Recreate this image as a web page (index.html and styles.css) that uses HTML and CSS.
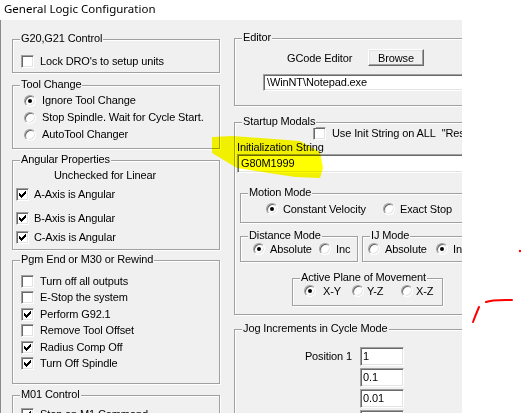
FILE: index.html
```html
<!DOCTYPE html>
<html>
<head>
<meta charset="utf-8">
<link rel="stylesheet" href="styles.css">
</head>
<body>
<svg class="defs" width="0" height="0" aria-hidden="true">
  <symbol id="chk" viewBox="0 0 7 7">
    <rect x="6" y="0" width="1" height="1"/>
    <rect x="5" y="1" width="2" height="1"/>
    <rect x="0" y="2" width="1" height="1"/><rect x="4" y="2" width="3" height="1"/>
    <rect x="0" y="3" width="2" height="1"/><rect x="3" y="3" width="3" height="1"/>
    <rect x="0" y="4" width="5" height="1"/>
    <rect x="1" y="5" width="3" height="1"/>
    <rect x="2" y="6" width="1" height="1"/>
  </symbol>
</svg>
<div class="screen">
  <div class="titlebar">General Logic Configuration</div>
  <div class="dialog">
    <div class="col-left">
      <div class="group g-units">
        <span class="legend">G20,G21 Control</span>
        <div class="opt"><span class="cb"></span><span>Lock DRO's to setup units</span></div>
      </div>
      <div class="group g-tool">
        <span class="legend">Tool Change</span>
        <div class="ropt-l"><span class="rb on"></span><span>Ignore Tool Change</span></div>
        <div class="ropt-l"><span class="rb"></span><span>Stop Spindle. Wait for Cycle Start.</span></div>
        <div class="ropt-l"><span class="rb"></span><span>AutoTool Changer</span></div>
      </div>
      <div class="group g-ang">
        <span class="legend">Angular Properties</span>
        <div class="note">Unchecked for Linear</div>
        <div class="opt a1"><span class="cb"><svg class="chk"><use href="#chk"/></svg></span><span>A-Axis is Angular</span></div>
        <div class="opt a2"><span class="cb"><svg class="chk"><use href="#chk"/></svg></span><span>B-Axis is Angular</span></div>
        <div class="opt a3"><span class="cb"><svg class="chk"><use href="#chk"/></svg></span><span>C-Axis is Angular</span></div>
      </div>
      <div class="group g-pgm">
        <span class="legend">Pgm End or M30 or Rewind</span>
        <div class="opt"><span class="cb"></span><span>Turn off all outputs</span></div>
        <div class="opt"><span class="cb"></span><span>E-Stop the system</span></div>
        <div class="opt"><span class="cb"><svg class="chk"><use href="#chk"/></svg></span><span>Perform G92.1</span></div>
        <div class="opt"><span class="cb"></span><span>Remove Tool Offset</span></div>
        <div class="opt"><span class="cb"><svg class="chk"><use href="#chk"/></svg></span><span>Radius Comp Off</span></div>
        <div class="opt"><span class="cb"><svg class="chk"><use href="#chk"/></svg></span><span>Turn Off Spindle</span></div>
      </div>
      <div class="group g-m01">
        <span class="legend">M01 Control</span>
        <div class="opt"><span class="cb"><svg class="chk"><use href="#chk"/></svg></span><span>Stop on M1 Command</span></div>
      </div>
    </div>

    <div class="col-right">
      <div class="group g-editor">
        <span class="legend">Editor</span>
        <div class="ed-row"><span class="ed-label">GCode Editor</span><span class="btn">Browse</span></div>
        <div class="field ed-field">\WinNT\Notepad.exe</div>
      </div>
      <div class="group g-startup">
        <span class="legend">Startup Modals</span>
        <div class="opt init-opt"><span class="cb"></span><span>Use Init String on ALL&nbsp; "Resets"</span></div>
        <div class="init-label">Initialization String</div>
        <div class="field init-field">G80M1999</div>
        <div class="group g-motion">
          <span class="legend">Motion Mode</span>
          <div class="rrow">
            <div class="ropt w117"><span class="rb on"></span><span>Constant Velocity</span></div>
            <div class="ropt"><span class="rb"></span><span>Exact Stop</span></div>
          </div>
        </div>
        <div class="pair">
          <div class="group g-dist">
            <span class="legend">Distance Mode</span>
            <div class="rrow">
              <div class="ropt w66"><span class="rb on"></span><span>Absolute</span></div>
              <div class="ropt"><span class="rb"></span><span>Inc</span></div>
            </div>
          </div>
          <div class="group g-ij">
            <span class="legend">IJ Mode</span>
            <div class="rrow">
              <div class="ropt w68"><span class="rb"></span><span>Absolute</span></div>
              <div class="ropt"><span class="rb on"></span><span>Inc</span></div>
            </div>
          </div>
        </div>
        <div class="group g-plane">
          <span class="legend">Active Plane of Movement</span>
          <div class="rrow tight">
            <div class="ropt w48"><span class="rb on"></span><span class="xy">X-Y</span></div>
            <div class="ropt w49"><span class="rb"></span><span>Y-Z</span></div>
            <div class="ropt"><span class="rb"></span><span>X-Z</span></div>
          </div>
        </div>
      </div>
      <div class="group g-jog">
        <span class="legend">Jog Increments in Cycle Mode</span>
        <div class="jog-row"><span class="jog-label">Position 1</span><span class="field jog-field">1</span></div>
        <div class="jog-row"><span class="jog-label"></span><span class="field jog-field">0.1</span></div>
        <div class="jog-row"><span class="jog-label"></span><span class="field jog-field">0.01</span></div>
        <div class="jog-row"><span class="jog-label"></span><span class="field jog-field">0.001</span></div>
      </div>
    </div>
  </div>

  <svg class="marks" width="521" height="413" viewBox="0 0 521 413">
    <polygon class="hl" points="212,137 232,136 300,141 320,152 323,168 320,178 295,177 237,168 212,153"/>
    <circle cx="520" cy="251" r="1.2" fill="#f00"/>
    <path d="M473 322 Q476 314 479 307" stroke="#f00" stroke-width="2" fill="none" stroke-linecap="round"/>
    <path d="M486 302 Q492 299.5 512 300" stroke="#f00" stroke-width="2" fill="none" stroke-linecap="round"/>
  </svg>
</div>
</body>
</html>
```

FILE: styles.css
```css
* { box-sizing: border-box; }

body {
  margin: 0;
  background: #fff;
  font-family: "Liberation Sans", Arial, sans-serif;
  font-size: 11px;
  letter-spacing: -0.12px;
  color: #000;
}

.defs { position: absolute; }

.screen {
  position: relative;
  width: 521px;
  height: 413px;
  overflow: hidden;
  background: #fff;
}

.titlebar {
  height: 20px;
  padding-left: 4px;
  font-family: "Noto Sans", "Open Sans", sans-serif;
  font-size: 11.5px;
  letter-spacing: 0;
  line-height: 18px;
  color: #000;
  background: #fff;
}

.dialog {
  display: flex;
  width: 462px;
  height: 393px;
  background: #f0f0f0;
  border-left: 1px solid #8c8c8c;
  padding-left: 11px;
  overflow: hidden;
}

.col-left {
  width: 208px;
  flex: none;
  padding-top: 19px;
  display: flex;
  flex-direction: column;
}

.col-right {
  width: 280px;
  flex: none;
  margin-left: 14px;
  padding-top: 18px;
  display: flex;
  flex-direction: column;
}

/* group box */
.group {
  position: relative;
  flex: none;
  border: 1px solid #a0a0a0;
  box-shadow: inset 1px 1px 0 #fff, 1px 1px 0 #fff;
}

.legend {
  position: absolute;
  top: -8px;
  left: 7px;
  padding: 0 1px;
  line-height: 13px;
  background: #f0f0f0;
  white-space: nowrap;
}

/* checkbox */
.opt {
  display: flex;
  align-items: center;
  gap: 6px;
  height: 13px;
  line-height: 13px;
  white-space: nowrap;
}

.cb {
  width: 13px;
  height: 13px;
  flex: none;
  background: #fff;
  border: 1px solid;
  border-color: #a0a0a0 #fff #fff #a0a0a0;
  box-shadow: inset 1px 1px 0 #696969, inset -1px -1px 0 #e3e3e3;
  display: flex;
  align-items: center;
  justify-content: center;
}

.chk {
  width: 7px;
  height: 7px;
  fill: #000;
  shape-rendering: crispEdges;
}

/* radio */
.rb {
  width: 12px;
  height: 12px;
  flex: none;
  border-radius: 50%;
  background: #fff;
  border: 1px solid;
  border-color: #a0a0a0 #fff #fff #a0a0a0;
  box-shadow: inset 1px 1px 0 #696969, inset -1px -1px 0 #e3e3e3;
  display: flex;
  align-items: center;
  justify-content: center;
}

.rb.on::after {
  content: "";
  width: 4px;
  height: 4px;
  border-radius: 50%;
  background: #000;
}

.ropt-l {
  display: flex;
  align-items: center;
  gap: 6px;
  height: 17px;
  line-height: 13px;
  white-space: nowrap;
}

.rrow {
  display: flex;
  align-items: center;
  height: 12px;
}

.ropt {
  display: flex;
  align-items: center;
  gap: 5px;
  flex: none;
  line-height: 13px;
  white-space: nowrap;
}

.rrow.tight .ropt { gap: 3px; }
.xy { padding-left: 4px; }

.w117 { width: 117px; }
.w66 { width: 66px; }
.w68 { width: 68px; }
.w48 { width: 48px; }
.w49 { width: 49px; }

/* sunken field */
.field {
  display: block;
  background: #fff;
  border: 1px solid;
  border-color: #a0a0a0 #fff #fff #a0a0a0;
  box-shadow: inset 1px 1px 0 #696969, inset -1px -1px 0 #e3e3e3;
  padding-left: 3px;
  white-space: nowrap;
  overflow: hidden;
}

/* raised button */
.btn {
  width: 56px;
  height: 17px;
  flex: none;
  display: flex;
  align-items: center;
  justify-content: center;
  background: #f0f0f0;
  border: 1px solid;
  border-color: #fff #696969 #696969 #fff;
  box-shadow: inset -1px -1px 0 #a0a0a0, inset 1px 1px 0 #e3e3e3;
}

/* left column groups */
.g-units {
  height: 34px;
  padding: 15px 0 0 8px;
}

.g-tool {
  margin-top: 12px;
  height: 64px;
  padding: 6px 0 0 11px;
}

.g-ang {
  margin-top: 11px;
  height: 90px;
  padding: 8px 0 0 3px;
}

.g-ang .opt { gap: 5px; }
.note { height: 13px; line-height: 13px; padding-left: 38px; }
.a1 { margin-top: 6px; }
.a2 { margin-top: 11px; }
.a3 { margin-top: 6px; }

.g-pgm {
  margin-top: 10px;
  height: 124px;
  padding: 14px 0 0 8px;
  display: flex;
  flex-direction: column;
  gap: 3.4px;
}

.g-m01 {
  margin-top: 11px;
  height: 60px;
  padding: 12px 0 0 8px;
}

/* right column groups */
.g-editor {
  height: 68px;
  padding-top: 10px;
}

.ed-row {
  display: flex;
  align-items: center;
  height: 17px;
  margin-left: 52px;
}

.ed-label { width: 81px; flex: none; }

.ed-field {
  margin: 8px 0 0 28px;
  height: 17px;
  line-height: 15px;
}

.g-startup {
  margin-top: 16px;
  height: 193px;
  padding-top: 4px;
}

.init-opt { margin-left: 78px; }

.init-label {
  margin-top: 1px;
  height: 13px;
  line-height: 13px;
  padding-left: 2px;
}

.init-field {
  margin-left: 2px;
  height: 19px;
  line-height: 17px;
}

.g-motion {
  margin: 20px 0 0 5px;
  height: 30px;
  padding: 9px 0 0 25px;
}

.pair {
  display: flex;
  gap: 4px;
  margin: 13px 0 0 5px;
}

.g-dist {
  width: 118px;
  height: 26px;
  padding: 6px 0 0 12px;
}

.g-ij {
  flex: 1;
  height: 26px;
  padding: 6px 0 0 5px;
}

.g-plane {
  margin: 16px 0 0 57px;
  width: 151px;
  height: 28px;
  padding: 6px 0 0 11px;
}

.g-jog {
  margin-top: 14px;
  height: 120px;
  padding-top: 17px;
}

.jog-row {
  display: flex;
  gap: 8px;
  height: 19px;
  margin-bottom: 2px;
}

.jog-label {
  width: 117px;
  flex: none;
  text-align: right;
  line-height: 19px;
}

.jog-field {
  width: 44px;
  height: 19px;
  line-height: 17px;
  padding-left: 2px;
}

/* annotations drawn over the screenshot */
.marks {
  position: absolute;
  top: 0;
  left: 0;
  pointer-events: none;
}

.hl {
  fill: #ffff00;
  mix-blend-mode: multiply;
}
```
